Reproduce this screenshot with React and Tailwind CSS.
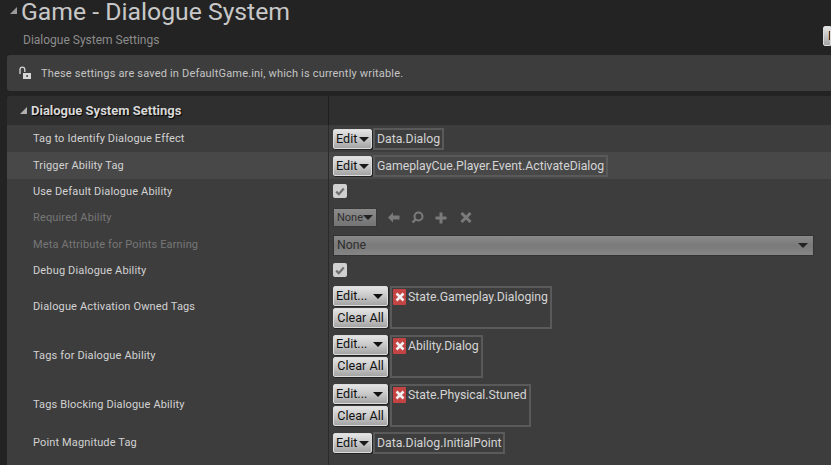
const font = "font-['Roboto',sans-serif]";

function Caret({ className = 'border-t-[#1a1a1a]' }) {
  return <span className={`inline-block w-0 h-0 border-l-[5px] border-r-[5px] border-t-[5px] border-l-transparent border-r-transparent ${className}`} />;
}

function Btn({ children, className = '' }) {
  return (
    <div className={`flex items-center h-[20px] rounded-[2px] border border-[#dcdcdc] shadow-[1px_1px_0_#222] bg-gradient-to-b from-[#e4e4e4] via-[#c8c8c8] to-[#a4a4a4] text-[#111] text-[12.6px] leading-none ${className}`}>
      {children}
    </div>
  );
}

function EditBtn() {
  return (
    <Btn className="w-[39px] pl-[2px] gap-[2px]">
      <span>Edit</span>
      <Caret />
    </Btn>
  );
}

function TagBox({ text }) {
  return (
    <div className="flex items-center h-[22px] px-[2px] border-2 border-[#5a5a5a] text-[#d4d4d4] text-[12.25px] leading-none whitespace-nowrap">
      {text}
    </div>
  );
}

function TagEdit({ text, className = '' }) {
  return (
    <div className={`flex items-center gap-[1px] ${className}`}>
      <EditBtn />
      <TagBox text={text} />
    </div>
  );
}

function RemoveIcon() {
  return (
    <span className="flex items-center justify-center w-[13px] h-[16px] rounded-[1px] bg-[#c44444] shrink-0">
      <svg width="10" height="10" viewBox="0 0 10 10">
        <path d="M1.5 1.5 8.5 8.5M8.5 1.5 1.5 8.5" stroke="#f2f2f2" strokeWidth="2.6" />
      </svg>
    </span>
  );
}

function TagList({ text }) {
  return (
    <div className="flex items-start gap-[2px]">
      <div className="flex flex-col gap-[2px] w-[55px]">
        <Btn className="justify-between pl-[2px] pr-[4px]">
          <span>Edit...</span>
          <Caret className="border-t-[#111]" />
        </Btn>
        <Btn className="justify-center">Clear All</Btn>
      </div>
      <div className="flex items-start gap-[2px] pl-[1px] pt-[1px] pr-[2px] h-[43px] border-2 border-[#5a5a5a] text-[#d4d4d4] text-[12.25px] leading-[16px] whitespace-nowrap">
        <RemoveIcon />
        <span>{text}</span>
      </div>
    </div>
  );
}

function Check() {
  return (
    <div className="flex items-center justify-center w-[14px] h-[14px] mb-[2px] rounded-[2px] bg-[#d0d0d0]">
      <svg width="10" height="9" viewBox="0 0 10 9">
        <path d="M1.2 4.6 3.8 7.2 8.8 1.6" fill="none" stroke="#6f6f6f" strokeWidth="2.2" />
      </svg>
    </div>
  );
}

function Row({ label, h, bg = 'bg-[#3d3d3d]', dim, children }) {
  return (
    <div className={`flex ${h} ${bg}`}>
      <div className={`flex items-center w-[321px] pl-[26px] pt-[1px] text-[11px] tracking-[0.15px] ${dim ? 'text-[#777]' : 'text-[#d2d2d2]'}`}>
        {label}
      </div>
      <div className="flex items-center flex-1 pl-[4px] pt-[1px] border-l border-[#2a2a2a]">{children}</div>
    </div>
  );
}

function DisabledTools() {
  return (
    <div className="flex items-center mb-[1px]">
      <div className="flex items-center justify-between w-[44px] h-[19px] pl-[3px] pr-[3px] rounded-[1px] border border-[#383838] bg-gradient-to-b from-[#8c8c8c] to-[#747474] text-[#2e2e2e] text-[11px] leading-none">
        <span>None</span>
        <Caret className="border-t-[#222]" />
      </div>
      <svg className="ml-[10px]" width="13" height="11" viewBox="0 0 13 11">
        <path d="M6 .5 1 5.5l5 5V7.5h6.5v-4H6z" fill="#7a7a7a" />
      </svg>
      <svg className="ml-[11px]" width="13" height="13" viewBox="0 0 13 13">
        <circle cx="7.5" cy="5.5" r="4" fill="none" stroke="#7a7a7a" strokeWidth="2" />
        <path d="M5 8 1.5 11.5" stroke="#7a7a7a" strokeWidth="2.4" />
      </svg>
      <svg className="ml-[11px]" width="12" height="12" viewBox="0 0 12 12">
        <path d="M6 .5v11M.5 6h11" stroke="#7a7a7a" strokeWidth="3" />
      </svg>
      <svg className="ml-[13px]" width="12" height="11" viewBox="0 0 12 11">
        <path d="M1.5 1 10.5 10M10.5 1 1.5 10" stroke="#7a7a7a" strokeWidth="3" />
      </svg>
    </div>
  );
}

export default function App() {
  return (
    <div className={`${font} w-[831px] h-[465px] overflow-hidden bg-[#232323]`}>
      <div className="h-[55px] pl-[10px]">
        <div className="flex items-center h-[25px] text-[#c8c8c8] text-[24.75px] leading-none">
          <span className="w-0 h-0 mr-[4px] mt-[-4px] border-b-[7px] border-l-[7px] border-b-[#9a9a9a] border-l-transparent" />
          <span>Game - Dialogue System</span>
        </div>
        <div className="flex items-center justify-between mt-[1px] pl-[13px] h-[20px]">
          <span className="text-[12px] text-[#8c8c8c] mt-[7px]">Dialogue System Settings</span>
          <span className="flex items-center w-[8px] h-[20px] pl-[4px] overflow-hidden rounded-l-[2px] border border-[#dcdcdc] bg-gradient-to-b from-[#e4e4e4] to-[#a4a4a4] text-[12.6px] text-[#111]">E</span>
        </div>
      </div>

      <div className="flex items-center h-[36px] ml-[7px] pl-[11px] gap-[9px] rounded-l-[3px] bg-[#3d3d3d]">
        <svg width="14" height="14" viewBox="0 0 14 14">
          <path d="M2 8V3.5a2.4 2.4 0 0 1 4.8 0V6" fill="none" stroke="#d6d6d6" strokeWidth="1.3" />
          <rect x="5" y="7" width="8" height="6" fill="#d6d6d6" />
          <rect x="8.4" y="9" width="1.4" height="2" fill="#3d3d3d" />
        </svg>
        <span className="mt-[2px] text-[11px] text-[#c4c4c4] tracking-[0.18px]">These settings are saved in DefaultGame.ini, which is currently writable.</span>
      </div>

      <div className="ml-[7px] mt-[5px] overflow-hidden rounded-tl-[3px]">
        <div className="flex h-[29px] bg-[#2f2f2f]">
          <div className="flex items-center w-[321px] pl-[13px] gap-[4px] text-[13px] font-bold text-[#d8d8d8] [text-shadow:1px_1px_1px_#000]">
            <span className="w-0 h-0 border-b-[7px] border-l-[7px] border-b-[#b0b0b0] border-l-transparent" />
            <span>Dialogue System Settings</span>
          </div>
          <div className="flex-1 border-l border-[#1f1f1f]" />
        </div>
        <Row label="Tag to Identify Dialogue Effect" h="h-[27px]"><TagEdit text="Data.Dialog" /></Row>
        <Row label="Trigger Ability Tag" h="h-[27px]" bg="bg-[#484848]"><TagEdit text="GameplayCue.Player.Event.ActivateDialog" /></Row>
        <Row label="Use Default Dialogue Ability" h="h-[25px]"><Check /></Row>
        <Row label="Required Ability" h="h-[27px]" dim><DisabledTools /></Row>
        <Row label="Meta Attribute for Points Earning" h="h-[27px]" dim>
          <div className="flex items-center justify-between w-[481px] h-[21px] mt-[1px] pl-[3px] pr-[5px] rounded-[1px] border border-[#333] bg-gradient-to-b from-[#8a8a8a] via-[#7a7a7a] to-[#858585] text-[#2e2e2e] text-[12.3px] leading-none">
            <span>None</span>
            <Caret className="border-t-[#222]" />
          </div>
        </Row>
        <Row label="Debug Dialogue Ability" h="h-[25px]"><Check /></Row>
        <Row label="Dialogue Activation Owned Tags" h="h-[48px]"><TagList text="State.Gameplay.Dialoging" /></Row>
        <Row label="Tags for Dialogue Ability" h="h-[49px]"><TagList text="Ability.Dialog" /></Row>
        <Row label="Tags Blocking Dialogue Ability" h="h-[50px]"><TagList text="State.Physical.Stuned" /></Row>
        <Row label="Point Magnitude Tag" h="h-[26px]"><TagEdit text="Data.Dialog.InitialPoint" className="mb-[1px]" /></Row>
        <Row label="" h="h-[9px]" />
      </div>
    </div>
  );
}
